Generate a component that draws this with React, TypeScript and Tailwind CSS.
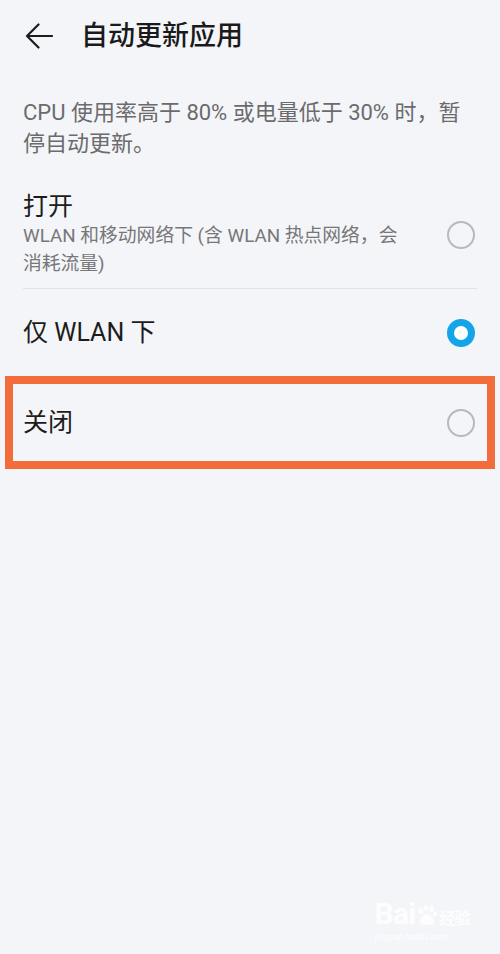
import React from 'react';

const FONT = { fontFamily: 'Roboto, "Noto Sans CJK SC", sans-serif' };

function Radio({ checked }: { checked?: boolean }) {
  if (checked) {
    return (
      <div className="w-[28px] h-[28px] rounded-full border-[7px] border-[#14a5e9] bg-white flex-shrink-0" />
    );
  }
  return <div className="w-[28px] h-[28px] rounded-full border-2 border-[#b9b9bc] flex-shrink-0" />;
}

export default function App() {
  return (
    <div className="relative w-[500px] h-[954px] bg-[#f4f5f8] overflow-hidden" style={FONT}>
      {/* Header */}
      <div className="h-[72px] flex items-center pl-[25px]">
        <svg width="28" height="26" viewBox="0 0 28 26" fill="none" className="mr-[28px]">
          <path d="M27 13H2M13.5 1.5L2 13l11.5 11.5" stroke="#1c1c1c" strokeWidth="2.2" strokeLinecap="round" strokeLinejoin="round" />
        </svg>
        <h1 className="text-[27px] font-medium text-[#1a1a1a] leading-none">自动更新应用</h1>
      </div>

      {/* Description */}
      <p className="mt-[25px] pl-[23px] pr-[15px] text-[22px] leading-[31px] text-[#6b6b6d]">
        CPU 使用率高于 80% 或电量低于 30% 时，暂<br />停自动更新。
      </p>

      {/* Options */}
      <div className="mt-[32px]">
        <div className="mx-[23px] pb-[10px] border-b border-[#e2e3e6] flex items-center">
          <div className="flex-1 min-w-0">
            <div className="text-[25px] leading-[31px] text-[#1c1c1c]">打开</div>
            <div className="text-[18.8px] leading-[28px] text-[#77777a]">
              WLAN 和移动网络下 (含 WLAN 热点网络，会<br />消耗流量)
            </div>
          </div>
          <div className="pr-[2px]">
            <Radio />
          </div>
        </div>

        <div className="h-[87px] pl-[23px] pr-[25px] flex items-center justify-between">
          <span className="text-[25px] text-[#1c1c1c]">仅 WLAN 下</span>
          <Radio checked />
        </div>

        <div className="mx-[5px] h-[93px] border-[8px] border-[#f36c3c] pl-[10px] pr-[12px] flex items-center justify-between">
          <span className="text-[25px] text-[#1c1c1c]">关闭</span>
          <Radio />
        </div>
      </div>

      {/* watermark */}
      <div className="absolute right-[30px] bottom-[10px] flex flex-col items-start text-white/80 select-none">
        <div className="flex items-end text-[30px] font-bold leading-none tracking-tight">
          Bai
          <svg width="22" height="22" viewBox="0 0 22 22" className="mx-[1px] mb-[3px]" fill="rgba(255,255,255,0.8)">
            <ellipse cx="5" cy="7" rx="2.4" ry="3" />
            <ellipse cx="10" cy="4" rx="2.4" ry="3" />
            <ellipse cx="15.5" cy="5" rx="2.4" ry="3" />
            <ellipse cx="19" cy="10" rx="2.2" ry="2.6" />
            <path d="M4 18c0-4 4-8 7-8s7 4 7 8c0 3-3 3-7 3s-7 0-7-3z" />
          </svg>
          <span className="text-[16px] leading-tight">经验</span>
        </div>
        <div className="text-[9px] mt-[2px]">jingyan.baidu.com</div>
      </div>
    </div>
  );
}
